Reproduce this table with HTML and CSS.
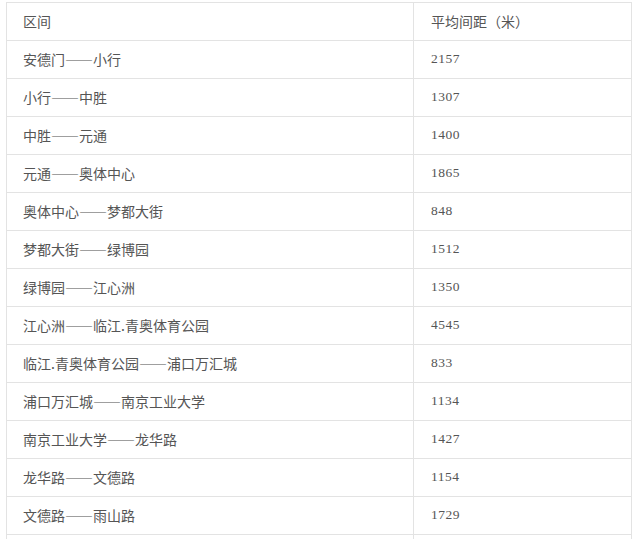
FILE: index.html
```html
<!DOCTYPE html>
<html lang="zh">
<head>
<meta charset="utf-8">
<link rel="stylesheet" href="styles.css">
</head>
<body>
<table class="dist">
  <tr><td class="name">区间</td><td class="name">平均间距（米）</td></tr>
  <tr><td class="name">安德门——小行</td><td class="num">2157</td></tr>
  <tr><td class="name">小行——中胜</td><td class="num">1307</td></tr>
  <tr><td class="name">中胜——元通</td><td class="num">1400</td></tr>
  <tr><td class="name">元通——奥体中心</td><td class="num">1865</td></tr>
  <tr><td class="name">奥体中心——梦都大街</td><td class="num">848</td></tr>
  <tr><td class="name">梦都大街——绿博园</td><td class="num">1512</td></tr>
  <tr><td class="name">绿博园——江心洲</td><td class="num">1350</td></tr>
  <tr><td class="name">江心洲——临江.青奥体育公园</td><td class="num">4545</td></tr>
  <tr><td class="name">临江.青奥体育公园——浦口万汇城</td><td class="num">833</td></tr>
  <tr><td class="name">浦口万汇城——南京工业大学</td><td class="num">1134</td></tr>
  <tr><td class="name">南京工业大学——龙华路</td><td class="num">1427</td></tr>
  <tr><td class="name">龙华路——文德路</td><td class="num">1154</td></tr>
  <tr><td class="name">文德路——雨山路</td><td class="num">1729</td></tr>
  <tr><td class="name">&nbsp;</td><td class="num">&nbsp;</td></tr>
</table>
</body>
</html>
```

FILE: styles.css
```css
html, body {
  margin: 0;
  padding: 0;
  background: #fff;
}
body {
  padding: 2px 0 0 6px;
}
.dist {
  border-collapse: collapse;
  width: 626px;
  table-layout: fixed;
}
.dist td {
  border: 1px solid #e3e3e3;
  height: 35px;
  padding: 0 0 2px 0;
  vertical-align: middle;
  color: #555;
}
.dist td:first-child {
  width: 390px;
  padding-left: 16px;
}
.dist td:last-child {
  padding-left: 17px;
}
.name {
  font-family: "Noto Sans CJK SC", "Noto Sans", sans-serif;
  font-size: 14px;
  font-weight: 400;
}
.num {
  font-family: "Liberation Serif", serif;
  font-size: 13.5px;
  letter-spacing: 0.5px;
}
```
